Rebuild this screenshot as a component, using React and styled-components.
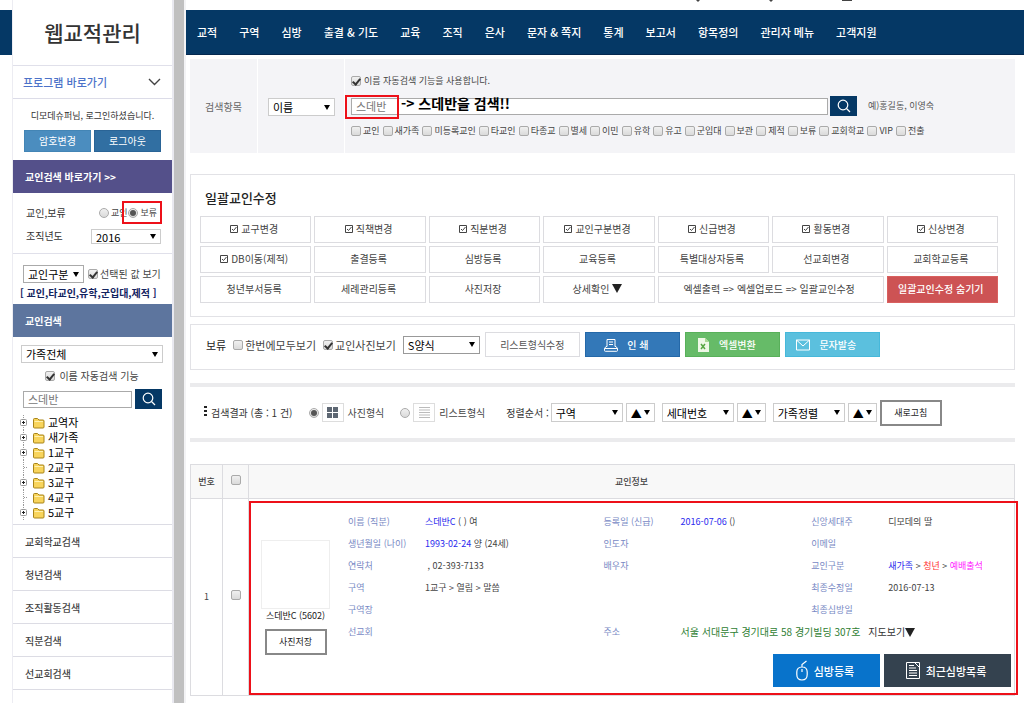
import React from 'react';
import styled, { createGlobalStyle, css } from 'styled-components';

const GlobalStyle = createGlobalStyle`
  *, *::before, *::after {
    box-sizing: border-box;
  }
  body {
    margin: 0;
    background: #fff;
    color: #444;
    font-family: 'Noto Sans CJK KR', 'Noto Sans', sans-serif;
    font-size: 10px;
    line-height: 14px;
  }
  button, input, select {
    font-family: inherit;
    margin: 0;
  }
  a {
    color: inherit;
    text-decoration: none;
  }
`;

// Page frame
const Page = styled.div`
  display: flex;
  min-height: 100vh;
`;

const Gutter = styled.div`
  width: 12px;
  flex: none;
  padding-top: 10px;
  &::before {
    content: '';
    display: block;
    height: 45px;
    background: #053865;
  }
`;

const Divider = styled.div`
  width: 14px;
  flex: none;
  background: #c0c0c0;
  border-left: 2px solid #e9e9f0;
  border-right: 2px solid #f3f3f5;
`;

const Main = styled.main`
  flex: 1;
  min-width: 0;
`;

const Content = styled.div`
  padding: 4px 9px 8px 4px;
`;

// Form controls
const Check = styled.input.attrs({ type: 'checkbox' })`
  appearance: none;
  display: inline-grid;
  place-items: center;
  flex: none;
  width: 10px;
  height: 10px;
  border: 1px solid #aaa;
  border-radius: 2px;
  background: linear-gradient(#f0f0f0, #dadada);
  &:checked::after {
    content: '';
    width: 5px;
    height: 8px;
    border: solid #333;
    border-width: 0 2px 2px 0;
    transform: rotate(40deg);
  }
`;

const Radio = styled.input.attrs({ type: 'radio' })`
  appearance: none;
  display: inline-grid;
  place-items: center;
  flex: none;
  width: 10px;
  height: 10px;
  border: 1px solid #aaa;
  border-radius: 50%;
  background: linear-gradient(#f0f0f0, #dadada);
  &:checked::after {
    content: '';
    width: 6px;
    height: 6px;
    border-radius: 50%;
    background: #555;
  }
`;

const Option = styled.label`
  display: flex;
  align-items: center;
  gap: ${(props) => props.$gap || 2}px;
  font-size: ${(props) => props.$size || 9}px;
  color: ${(props) => props.$color || '#444'};
  white-space: nowrap;
`;

const SelectBox = styled.span`
  display: grid;
  align-items: center;
  flex: none;
  width: ${(props) => props.$width};
  &::after {
    content: '';
    grid-area: 1 / 1;
    justify-self: end;
    margin-right: 5px;
    border: solid transparent;
    border-width: 5px 3px 0;
    border-top-color: #000;
    pointer-events: none;
  }
`;

const NativeSelect = styled.select`
  grid-area: 1 / 1;
  appearance: none;
  width: 100%;
  height: ${(props) => props.$height}px;
  padding: 0 4px;
  border: 1px solid ${(props) => props.$border || '#ccc'};
  border-radius: 0;
  background: #fff;
  color: #000;
  font-size: 11px;
  line-height: 14px;
`;

const Select = ({ label, value, width, height = 18, border }) => (
  <SelectBox $width={width}>
    <NativeSelect aria-label={label} $height={height} $border={border}>
      <option>{value}</option>
    </NativeSelect>
  </SelectBox>
);

const TextInput = styled.input.attrs({ type: 'text' })`
  flex: 1;
  min-width: 0;
  height: 17px;
  padding: 0 4px;
  border: 1px solid #aaa;
  color: #777;
  font-size: 11px;
`;

const SearchButton = styled.button`
  display: grid;
  place-items: center;
  flex: none;
  width: 27px;
  height: 20px;
  padding: 0;
  border: none;
  background: #053865;
  color: #fff;
`;

const SearchIcon = () => (
  <svg width="14" height="14" viewBox="0 0 14 14" fill="none" stroke="currentColor" strokeWidth="1.2">
    <circle cx="6" cy="6" r="4.8" />
    <path d="M9.5 9.5 13 13" />
  </svg>
);

const highlight = css`
  content: '';
  position: absolute;
  border: 2px solid #ed1019;
  pointer-events: none;
`;

// Sidebar
const Sidebar = styled.aside`
  flex: none;
  width: 160px;
  padding-top: 10px;
  border-left: 1px solid #ececf2;
`;

const Brand = styled.h1`
  margin: 0;
  height: 56px;
  border-bottom: 1px solid #e0e0ea;
  color: #333;
  font-size: 21px;
  font-weight: 500;
  line-height: 45px;
  text-align: center;
`;

const ShortcutButton = styled.button`
  display: flex;
  align-items: center;
  justify-content: space-between;
  width: 100%;
  height: 33px;
  padding: 0 11px 0 10px;
  border: none;
  border-bottom: 1px solid #dcdce8;
  background: #fff;
  color: #4c72c9;
  font-size: 11px;
  font-weight: 500;
`;

const LoginBox = styled.div`
  padding: 9px 11px 8px;
  color: #333;
  font-size: 9px;
  line-height: 16px;
  text-align: center;
`;

const LoginButtons = styled.div`
  display: flex;
  gap: 3px;
  margin-top: 6px;
`;

const LoginButton = styled.button`
  flex: 1;
  height: 22px;
  padding: 0;
  border: 1px solid ${(props) => (props.$dark ? '#2a6496' : '#4385b5')};
  background: ${(props) => (props.$dark ? '#316fa2' : '#4b8dbf')};
  color: #fff;
  font-size: 10px;
  line-height: 14px;
`;

const SideHeading = styled.h2`
  margin: 0;
  padding-left: 12px;
  background: ${(props) => props.$color};
  color: #fff;
  font-size: 10px;
  font-weight: 700;
  line-height: 33px;
`;

const FilterBox = styled.div`
  display: grid;
  gap: 9px;
  padding: 13px 11px 10px 13px;
  border-bottom: 1px solid #e0e0ea;
`;

const FilterRow = styled.div`
  display: flex;
  align-items: center;
  justify-content: space-between;
  height: 14px;
  color: #333;
`;

const RadioPair = styled.div`
  display: flex;
  gap: 1px;
`;

const MarkedOption = styled(Option)`
  position: relative;
  padding-right: 4px;
  &::after {
    ${highlight}
    inset: -5px -1px -4px -6px;
  }
`;

const KindBox = styled.div`
  padding: 11px 4px 3px 10px;
`;

const KindRow = styled.div`
  display: flex;
  align-items: center;
  gap: 4px;
`;

const KindList = styled.p`
  margin: 2px 0 0 -3px;
  color: #12235f;
  font-size: 10px;
  font-weight: 700;
  line-height: 16px;
  white-space: nowrap;
`;

const MemberSearch = styled.div`
  display: grid;
  grid-template-columns: minmax(0, 1fr);
  gap: 6px;
  padding: 8px 9px 6px 8px;
`;

const MemberAuto = styled(Option)`
  justify-content: center;
`;

const MemberInput = styled.div`
  display: flex;
  align-items: center;
  gap: 3px;
  padding: 0 1px 0 2px;
`;

const Tree = styled.ul`
  margin: 0;
  padding: 0 0 4px 6px;
  border-bottom: 1px solid #dcdce4;
  list-style: none;
`;

const TreeItem = styled.li`
  display: flex;
  align-items: center;
  gap: 3px;
  height: 15px;
  color: #000;
  font-size: 11px;
  line-height: 15px;
`;

const SideLink = styled.a`
  display: block;
  padding: 1px 0 0 12px;
  border-bottom: 1px solid #dcdce4;
  font-weight: 500;
  line-height: 31px;
`;

const tree = [
  { name: '교역자', open: true },
  { name: '새가족', open: true },
  { name: '1교구', open: true },
  { name: '2교구', open: false },
  { name: '3교구', open: true },
  { name: '4교구', open: false },
  { name: '5교구', open: true },
];

const FolderIcon = ({ expandable }) => (
  <svg width="26" height="15" viewBox="0 0 26 15" fill="none">
    <path d="M4.500 0V15M5 7.500H9" stroke="#999" strokeDasharray="1 1" />
    {expandable && (
      <>
        <rect x="1.500" y="4.500" width="6" height="6" rx="1" fill="#fff" stroke="#999" />
        <path d="M3 7.500H6M4.500 6V9" stroke="#222" />
      </>
    )}
    <path d="M14.500 4.500q0-1 1-1h3l1.500 1.500h4q1 0 1 1v6q0 1-1 1h-8.500q-1 0-1-1z" fill="#f8d45c" stroke="#a88419" />
    <path d="M15.500 6.500h8.500" stroke="#fff1b0" />
  </svg>
);

const SidePanel = () => (
  <Sidebar>
    <Brand>웹교적관리</Brand>
    <ShortcutButton>
      프로그램 바로가기
      <svg width="13" height="8" viewBox="0 0 13 8" fill="none" stroke="#444" strokeWidth="1.4">
        <path d="M1 1 6.500 6.500 12 1" />
      </svg>
    </ShortcutButton>
    <LoginBox>
      디모데슈퍼님, 로그인하셨습니다.
      <LoginButtons>
        <LoginButton>암호변경</LoginButton>
        <LoginButton $dark>로그아웃</LoginButton>
      </LoginButtons>
    </LoginBox>
    <SideHeading $color="#54508a">교인검색 바로가기 &gt;&gt;</SideHeading>
    <FilterBox>
      <FilterRow>
        교인,보류
        <RadioPair>
          <Option><Radio name="state" />교인</Option>
          <MarkedOption><Radio name="state" defaultChecked />보류</MarkedOption>
        </RadioPair>
      </FilterRow>
      <FilterRow>
        조직년도
        <Select label="조직년도" value="2016" width="70px" height={15} />
      </FilterRow>
    </FilterBox>
    <KindBox>
      <KindRow>
        <Select label="교인구분" value="교인구분" width="61px" border="#aaa" />
        <Option $size={10}><Check defaultChecked />선택된 값 보기</Option>
      </KindRow>
      <KindList>[ 교인,타교인,유학,군입대,제적 ]</KindList>
    </KindBox>
    <SideHeading $color="#5d759e">교인검색</SideHeading>
    <MemberSearch>
      <Select label="가족" value="가족전체" width="100%" />
      <MemberAuto $gap={4} $size={10}><Check defaultChecked />이름 자동검색 기능</MemberAuto>
      <MemberInput>
        <TextInput aria-label="교인 이름" defaultValue="스데반" />
        <SearchButton aria-label="검색"><SearchIcon /></SearchButton>
      </MemberInput>
    </MemberSearch>
    <Tree>
      {tree.map((node) => (
        <TreeItem key={node.name}>
          <FolderIcon expandable={node.open} />
          {node.name}
        </TreeItem>
      ))}
    </Tree>
    <nav>
      {['교회학교검색', '청년검색', '조직활동검색', '직분검색', '선교회검색'].map((name) => (
        <SideLink href="#" key={name}>{name}</SideLink>
      ))}
    </nav>
  </Sidebar>
);

// Top navigation
const TopStrip = styled.div`
  display: flex;
  justify-content: flex-end;
  height: 10px;
  padding-right: 172px;
`;

const NavBar = styled.nav`
  display: flex;
  gap: 22px;
  height: 45px;
  padding-left: 11px;
  border-bottom: 1px solid #04284f;
  background: #053865;
  color: #fff;
  font-size: 11px;
  font-weight: 500;
  line-height: 44px;
  white-space: nowrap;
`;

const menus = [
  '교적', '구역', '심방', '출결 & 기도', '교육', '조직', '은사', '문자 & 쪽지',
  '통계', '보고서', '항목정의', '관리자 메뉴', '고객지원',
];

// Search section
const SearchPanel = styled.section`
  display: grid;
  grid-template-columns: 67px 86px 1fr;
  gap: 1px;
  height: 94px;
`;

const SearchCell = styled.div`
  display: flex;
  flex-direction: column;
  justify-content: center;
  gap: 8px;
  padding: ${(props) => props.$padding};
  background: #f4f4f7;
  color: #666;
  text-align: center;
`;

const SearchLine = styled.div`
  display: grid;
  grid-template-columns: 1fr 27px 156px;
  align-items: center;
  gap: 2px;
  color: #555;
  font-size: 9px;
  text-align: left;
`;

const Hint = styled.span`
  padding-left: 9px;
`;

const NameField = styled.div`
  position: relative;
  display: flex;
  &::before {
    ${highlight}
    top: -3px;
    left: -6px;
    width: 54px;
    height: 24px;
  }
`;

const Note = styled.strong`
  position: absolute;
  top: -3px;
  left: 50px;
  color: #000;
  font-size: 14px;
  line-height: 16px;
`;

const OptionLine = styled.div`
  display: flex;
  gap: 3px;
`;

const kinds = [
  '교인', '새가족', '미등록교인', '타교인', '타종교', '별세', '이민', '유학',
  '유고', '군입대', '보관', '제적', '보류', '교회학교', 'VIP', '전출',
];

// Batch edit section
const Panel = styled.section`
  margin-top: ${(props) => props.$top}px;
  padding: ${(props) => props.$padding};
  border: 1px solid #e2e2e6;
`;

const PanelTitle = styled.h2`
  margin: 0 0 8px 5px;
  color: #222;
  font-size: 13px;
  font-weight: 500;
  line-height: 20px;
`;

const ButtonGrid = styled.div`
  display: grid;
  grid-template-columns: repeat(7, 1fr);
  grid-auto-rows: 27px;
  gap: 3px;
`;

const GridButton = styled.button`
  display: flex;
  align-items: center;
  justify-content: center;
  gap: 3px;
  grid-column: span ${(props) => props.$span || 1};
  padding: 0 3px 2px 0;
  border: 1px solid ${(props) => (props.$danger ? '#d9605f' : '#dcdce0')};
  background: ${(props) => (props.$danger ? '#cd5354' : '#fff')};
  color: ${(props) => (props.$danger ? '#fff' : '#444')};
  font-size: 10px;
  font-weight: ${(props) => (props.$danger ? 500 : 400)};
  line-height: 14px;
  white-space: nowrap;
`;

const TickIcon = () => (
  <svg width="8" height="8" viewBox="0 0 8 8" fill="none" stroke="#444">
    <path d="M.5.5h7v7h-7z" />
    <path d="M2 4 3.500 5.500 6.500 2" />
  </svg>
);

const DownIcon = () => (
  <svg width="10" height="9" viewBox="0 0 10 9">
    <path d="M0 0h10L5 9z" fill="#222" />
  </svg>
);

const actions = [
  { name: '교구변경', tick: true },
  { name: '직책변경', tick: true },
  { name: '직분변경', tick: true },
  { name: '교인구분변경', tick: true },
  { name: '신급변경', tick: true },
  { name: '활동변경', tick: true },
  { name: '신상변경', tick: true },
  { name: 'DB이동(제적)', tick: true },
  { name: '출결등록' },
  { name: '심방등록' },
  { name: '교육등록' },
  { name: '특별대상자등록' },
  { name: '선교회변경' },
  { name: '교회학교등록' },
  { name: '청년부서등록' },
  { name: '세례관리등록' },
  { name: '사진저장' },
  { name: '상세확인', more: true },
  { name: '엑셀출력 => 엑셀업로드 => 일괄교인수정', span: 2 },
  { name: '일괄교인수정 숨기기', danger: true },
];

// Output toolbar
const Toolbar = styled.div`
  display: flex;
  align-items: center;
  gap: 5px;
  color: #222;
  font-size: 11px;
`;

const ToolOptions = styled.div`
  display: flex;
  align-items: center;
  gap: 7px;
`;

const ToolButton = styled.button`
  display: flex;
  align-items: center;
  justify-content: center;
  gap: 9px;
  width: 95px;
  height: 25px;
  padding: 0 ${(props) => (props.$color ? 12 : 0)}px 0 0;
  border: 1px solid ${(props) => props.$border || '#dcdce0'};
  background: ${(props) => props.$color || '#fff'};
  color: ${(props) => (props.$color ? '#fff' : '#555')};
  font-size: 10px;
  font-weight: ${(props) => (props.$color ? 500 : 400)};
  line-height: 14px;
`;

const PrintIcon = () => (
  <svg width="14" height="14" viewBox="0 0 14 14" fill="none" stroke="#fff">
    <path d="M3 8.500V1.500h8v7M5 4h4M5 6.500h4M3 8.500H2L.5 10.500v2q0 .8.8.8h11.400q.8 0 .8-.8v-2L12 8.500h-1M.5 10.500h13" />
  </svg>
);

const ExcelIcon = () => (
  <svg width="13" height="14" viewBox="0 0 13 14">
    <path d="M1 0h7l4 4v10H1z" fill="#eef8e6" />
    <path d="M8 0v4h4" fill="#a9d893" />
    <path d="M4 6l4 5M8 6l-4 5" stroke="#57a642" strokeWidth="1.5" />
  </svg>
);

const MailIcon = () => (
  <svg width="14" height="12" viewBox="0 0 14 12" fill="none" stroke="#fff">
    <path d="M.5 1h13v10H.5zM.5 1 7 7l6.500-6" />
  </svg>
);

// Result toolbar
const ResultBar = styled.section`
  display: flex;
  align-items: center;
  height: 59px;
  margin: 13px 0 22px;
  padding-left: 14px;
  border: solid #ebebed;
  border-width: 4px 0;
  color: #333;
  white-space: nowrap;
`;

const ResultCount = styled.span`
  display: flex;
  gap: 4px;
  margin-right: 16px;
`;

const ViewOption = styled(Option)`
  margin-right: ${(props) => props.$after}px;
`;

const ViewIcon = styled.span`
  display: grid;
  place-items: center;
  width: 22px;
  height: 19px;
  margin-right: 1px;
  border: 1px solid #ddd;
`;

const SortGroup = styled.span`
  display: flex;
  align-items: center;
  gap: 3px;
  margin: 0 5px 0 2px;
  &:last-of-type {
    margin-right: 3px;
  }
`;

const OutlineButton = styled.button`
  width: 62px;
  height: 26px;
  padding: 0;
  border: 2px solid #888;
  background: #fff;
  color: #222;
  font-size: 9px;
  line-height: 12px;
`;

// Member table
const MemberTable = styled.table`
  width: 100%;
  border-collapse: collapse;
  table-layout: fixed;
  color: #444;
  font-size: 9px;
  text-align: center;
`;

const HeadCell = styled.th`
  width: ${(props) => props.$width || 'auto'};
  height: 34px;
  padding: 0;
  border: 1px solid #dcdce0;
  background: #f8f8f8;
  font-weight: 500;
`;

const Cell = styled.td`
  position: relative;
  padding: 0;
  border: 1px solid #dcdce0;
`;

const MemberCell = styled(Cell)`
  &::after {
    ${highlight}
    inset: 2px -4px 0 0;
  }
`;

const Member = styled.div`
  display: flex;
  align-items: center;
  padding: 12px 3px 8px 0;
  text-align: left;
`;

const PhotoColumn = styled.div`
  display: flex;
  flex: none;
  flex-direction: column;
  align-items: center;
  width: 93px;
  margin: 0 6px 4px 0;
  color: #222;
`;

const Photo = styled.div`
  width: 69px;
  height: 69px;
  border: 1px solid #eee;
`;

const PhotoName = styled.span`
  margin-bottom: 6px;
`;

const Details = styled.div`
  flex: 1;
`;

const InfoGrid = styled.dl`
  display: grid;
  grid-template-columns: 77px 179fr 77px 131fr 77px 123fr;
  grid-auto-rows: 22px;
  align-items: center;
  margin: 0 0 11px;
  white-space: nowrap;
`;

const Term = styled.dt`
  grid-column: ${(props) => props.$col};
  grid-row: ${(props) => props.$row};
  color: #7788c4;
`;

const Value = styled.dd`
  grid-column: ${(props) => props.$col};
  grid-row: ${(props) => props.$row};
  margin: 0;
`;

const Address = styled(Value)`
  display: flex;
  align-items: center;
  gap: 8px;
  color: #2e7d32;
  font-size: 10px;
`;

const MapLink = styled.a`
  display: flex;
  align-items: center;
  color: #333;
`;

const Tint = styled.span`
  color: ${(props) => props.$color};
`;

const VisitButtons = styled.div`
  display: flex;
  justify-content: flex-end;
  gap: 4px;
`;

const VisitButton = styled.button`
  display: flex;
  align-items: center;
  justify-content: center;
  gap: 6px;
  width: ${(props) => props.$width}px;
  height: 33px;
  padding: 0 3px 0 0;
  border: none;
  background: ${(props) => props.$color};
  color: #fff;
  font-size: 11px;
  font-weight: 500;
`;

const MouseIcon = () => (
  <svg width="12" height="21" viewBox="0 0 12 21" fill="none" stroke="#fff" strokeWidth="1.2">
    <path d="M6 7C2.500 7 .8 9 .8 12v2.500q0 5.500 5.200 5.500t5.200-5.500V12C11.200 9 9.500 7 6 7zM6 9v3M6 7V4.500L10.500 1" />
  </svg>
);

const PaperIcon = () => (
  <svg width="14" height="17" viewBox="0 0 14 17" fill="none" stroke="#fff">
    <path d="M.5.5h13v16H.5zM8.500.5l5 5M3 3.500h5M3 6h7M3 8.500h8M3 11h8M3 13.500h8" />
  </svg>
);

const fields = [
  { col: 1, row: 1, name: '이름 (직분)', value: <><Tint $color="#2a2aee">스데반C</Tint> ( ) 여</> },
  { col: 1, row: 2, name: '생년월일 (나이)', value: <><Tint $color="#2a2aee">1993-02-24</Tint> 양 (24세)</> },
  { col: 1, row: 3, name: '연락처', value: <>&nbsp;, 02-393-7133</> },
  { col: 1, row: 4, name: '구역', value: '1교구 > 열림 > 말씀' },
  { col: 1, row: 5, name: '구역장' },
  { col: 1, row: 6, name: '선교회' },
  { col: 3, row: 1, name: '등록일 (신급)', value: <><Tint $color="#2a2aee">2016-07-06</Tint> ()</> },
  { col: 3, row: 2, name: '인도자' },
  { col: 3, row: 3, name: '배우자' },
  { col: 5, row: 1, name: '신앙세대주', value: '디모데의 딸' },
  { col: 5, row: 2, name: '이메일' },
  {
    col: 5,
    row: 3,
    name: '교인구분',
    value: (
      <>
        <Tint $color="#2a2aee">새가족</Tint> &gt; <Tint $color="#f33">청년</Tint> &gt; <Tint $color="#f2f">예배출석</Tint>
      </>
    ),
  },
  { col: 5, row: 4, name: '최종수정일', value: '2016-07-13' },
  { col: 5, row: 5, name: '최종심방일' },
];

const App = () => {
  return (
    <>
      <GlobalStyle />
      <Page lang="ko">
        <Gutter />
        <SidePanel />
        <Divider />
        <Main>
          <TopStrip aria-hidden="true">
            <svg width="156" height="3" viewBox="0 0 156 3" fill="#444">
              <path d="M0 0h4L2 2zM73 0h4l-2 2zM146 0h10v1h-10z" />
            </svg>
          </TopStrip>
          <NavBar>
            {menus.map((name) => <a href="#" key={name}>{name}</a>)}
          </NavBar>
          <Content>
            <SearchPanel>
              <SearchCell $padding="2px 0 0">검색항목</SearchCell>
              <SearchCell $padding="2px 9px 0 10px">
                <Select label="검색항목" value="이름" width="100%" />
              </SearchCell>
              <SearchCell $padding="0 0 0 6px">
                <Option $gap={3}><Check defaultChecked />이름 자동검색 기능을 사용합니다.</Option>
                <SearchLine>
                  <NameField>
                    <TextInput aria-label="이름" defaultValue="스데반" />
                    <Note>-&gt; 스데반을 검색!!</Note>
                  </NameField>
                  <SearchButton aria-label="검색"><SearchIcon /></SearchButton>
                  <Hint>예)홍길동, 이영숙</Hint>
                </SearchLine>
                <OptionLine>
                  {kinds.map((name) => (
                    <Option key={name}><Check />{name}</Option>
                  ))}
                </OptionLine>
              </SearchCell>
            </SearchPanel>

            <Panel $top={21} $padding="13px 16px 13px 9px">
              <PanelTitle>일괄교인수정</PanelTitle>
              <ButtonGrid>
                {actions.map(({ name, tick, more, span, danger }) => (
                  <GridButton key={name} $span={span} $danger={danger}>
                    {tick && <TickIcon />}
                    {name}
                    {more && <DownIcon />}
                  </GridButton>
                ))}
              </ButtonGrid>
            </Panel>

            <Panel $top={7} $padding="7px 14px 12px 15px">
              <Toolbar>
                <ToolOptions>
                  보류
                  <Option $size={11}><Check />한번에모두보기</Option>
                  <Option $size={11}><Check defaultChecked />교인사진보기</Option>
                  <Select label="양식" value="S양식" width="77px" border="#999" />
                </ToolOptions>
                <ToolButton>리스트형식수정</ToolButton>
                <ToolButton $color="#3378b8" $border="#2468a8"><PrintIcon />인 쇄</ToolButton>
                <ToolButton $color="#66bb68" $border="#58b05a"><ExcelIcon />엑셀변환</ToolButton>
                <ToolButton $color="#5bc0de" $border="#46b8da"><MailIcon />문자발송</ToolButton>
              </Toolbar>
            </Panel>

            <ResultBar>
              <ResultCount>
                <svg width="3" height="10" viewBox="0 0 3 10" fill="#222">
                  <path d="M0 0h3v2H0zM0 4h3v2H0zM0 8h3v2H0z" />
                </svg>
                검색결과 (총 : 1 건)
              </ResultCount>
              <ViewOption $size={10} $gap={3} $after={16}>
                <Radio name="view" defaultChecked />
                <ViewIcon>
                  <svg width="11" height="11" viewBox="0 0 11 11" fill="#5d6773">
                    <path d="M0 0h5v5H0zM6 0h5v5H6zM0 6h5v5H0zM6 6h5v5H6z" />
                  </svg>
                </ViewIcon>
                사진형식
              </ViewOption>
              <ViewOption $size={10} $gap={3} $after={21}>
                <Radio name="view" />
                <ViewIcon>
                  <svg width="11" height="12" viewBox="0 0 11 12" stroke="#bbb">
                    <path d="M0 .5h11M0 3h11M0 5.500h11M0 8h11M0 10.500h11" />
                  </svg>
                </ViewIcon>
                리스트형식
              </ViewOption>
              정렬순서 :
              {['구역', '세대번호', '가족정렬'].map((name) => (
                <SortGroup key={name}>
                  <Select label={name} value={name} width="72px" height={19} />
                  <Select label={`${name} 방향`} value="▲" width="29px" height={19} />
                </SortGroup>
              ))}
              <OutlineButton>새로고침</OutlineButton>
            </ResultBar>

            <MemberTable>
              <thead>
                <tr>
                  <HeadCell $width="32px">번호</HeadCell>
                  <HeadCell $width="26px"><Check aria-label="전체 선택" /></HeadCell>
                  <HeadCell>교인정보</HeadCell>
                </tr>
              </thead>
              <tbody>
                <tr>
                  <Cell>1</Cell>
                  <Cell><Check aria-label="스데반C 선택" /></Cell>
                  <MemberCell>
                    <Member>
                      <PhotoColumn>
                        <Photo />
                        <PhotoName>스데반C (5602)</PhotoName>
                        <OutlineButton>사진저장</OutlineButton>
                      </PhotoColumn>
                      <Details>
                        <InfoGrid>
                          {fields.map(({ col, row, name, value }) => (
                            <React.Fragment key={name}>
                              <Term $col={col} $row={row}>{name}</Term>
                              <Value $col={col + 1} $row={row}>{value}</Value>
                            </React.Fragment>
                          ))}
                          <Term $col={3} $row={6}>주소</Term>
                          <Address $col="4 / 7" $row={6}>
                            서울 서대문구 경기대로 58 경기빌딩 307호
                            <MapLink href="#">지도보기<DownIcon /></MapLink>
                          </Address>
                        </InfoGrid>
                        <VisitButtons>
                          <VisitButton $width={107} $color="#0873cb"><MouseIcon />심방등록</VisitButton>
                          <VisitButton $width={127} $color="#34424f"><PaperIcon />최근심방목록</VisitButton>
                        </VisitButtons>
                      </Details>
                    </Member>
                  </MemberCell>
                </tr>
              </tbody>
            </MemberTable>
          </Content>
        </Main>
      </Page>
    </>
  );
};

export default App;
